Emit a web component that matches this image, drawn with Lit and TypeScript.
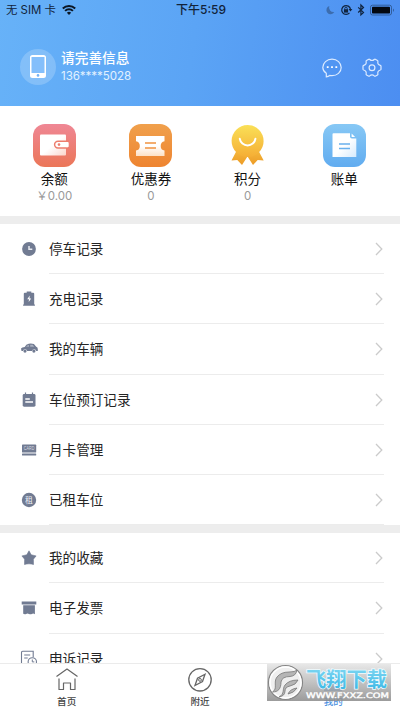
import { LitElement, html, svg, css } from "lit";
import { customElement } from "lit/decorators.js";

const statIcons = {
  wallet: svg`<defs><linearGradient id="w" x2="0" y2="1"><stop stop-color="#ef8795"/><stop offset="1" stop-color="#eb7658"/></linearGradient><linearGradient id="wi" x2="1" y2="1"><stop stop-color="#fff"/><stop offset=".5" stop-color="#fff"/><stop offset="1" stop-color="#fbd5cc"/></linearGradient></defs>
    <rect width="43" height="43" rx="12" fill="url(#w)"/><path d="M7 11.500q0-1 1-1h24q1 0 1 1v19q0 1-1 1H8q-1 0-1-1z" fill="url(#wi)"/>
    <path d="M35 17.200H25a3.400 3.400 0 0 0 0 6.800h10z" fill="#fff" stroke="#ed7c6c" stroke-width="1.500"/><rect x="33" y="17.900" width="2.700" height="5.400" rx="1" fill="#fff"/><circle cx="26" cy="20.600" r="1.300" fill="#ed7c6c"/>`,
  coupon: svg`<defs><linearGradient id="c" x2="0" y2="1"><stop stop-color="#f0a04c"/><stop offset="1" stop-color="#ee8430"/></linearGradient><linearGradient id="ci" x2="0" y2="1"><stop stop-color="#fff"/><stop offset=".5" stop-color="#fff"/><stop offset="1" stop-color="#fde1c6"/></linearGradient></defs>
    <rect width="43" height="43" rx="12" fill="url(#c)"/><path d="M7 12h28.500v5.200a4.800 4.800 0 0 0 0 9.400V32H7v-5.400a4.800 4.800 0 0 0 0-9.400z" fill="url(#ci)"/><path d="M16 19h11M16 24h11" stroke="#ef9240" stroke-width="1.500"/>`,
  medal: svg`<defs><linearGradient id="m" x2="0" y2="1"><stop stop-color="#fae057"/><stop offset="1" stop-color="#f5ae35"/></linearGradient><linearGradient id="mr" x2="0" y2="1"><stop stop-color="#f5bd42"/><stop offset="1" stop-color="#ed9b25"/></linearGradient></defs>
    <path d="M12 24 5.500 36.500l5.800-.4L16 41l5.500-8.500L27 41l4.700-5 6 .5L31 24z" fill="url(#mr)"/><circle cx="21.600" cy="17" r="16" fill="url(#m)"/><path d="M13.800 14.800a7.900 7.900 0 0 0 15.600 0" fill="none" stroke="#fff" stroke-width="2" stroke-linecap="round"/>`,
  bill: svg`<defs><linearGradient id="b" x2="0" y2="1"><stop stop-color="#87c8f5"/><stop offset="1" stop-color="#61acf0"/></linearGradient><linearGradient id="bi" x2="1" y2="1"><stop stop-color="#fff"/><stop offset=".5" stop-color="#fff"/><stop offset="1" stop-color="#d5eafd"/></linearGradient></defs>
    <rect width="43" height="43" rx="12" fill="url(#b)"/><path d="M10.500 9.300h16.500v3.200q0 2 2 2h4.300v18.500H9.500v-22.700q0-1 1-1z" fill="url(#bi)"/><path d="M28.600 9.500v3.400h3.500z" fill="#fff"/><path d="M16 20h11M16 24.500h11" stroke="#69b0ed" stroke-width="1.500"/>`,
};

const ink = "#717b92";
const rowIcons = {
  clock: svg`<circle cx="9" cy="9" r="6.900" fill="${ink}"/><path d="M9 6v3.300h3.300" fill="none" stroke="#e8eaf0" stroke-width="1.500"/>`,
  battery: svg`<path d="M6.700 1.500h4.600v1.200h1.900q1 0 1 1v10.800h.7v1.200H3.100v-1.200h.7V3.700q0-1 1-1h1.900z" fill="${ink}"/><path d="M9.700 5.500 7.200 9.300H9L8.700 12l2.500-3.600H9.500z" fill="#fff"/>`,
  car: svg`<path d="M1 8.600Q2 7.200 4.700 7q1.300-2.900 4-3.300 3-.4 5.200.3l2.300 2.700q1.600.4 1.600 2.400v2h-1.500a2.200 2.200 0 0 0-4.300 0H7.200a2.200 2.200 0 0 0-4.300 0H1.500z" fill="${ink}"/><path d="M6 6.800Q7.200 5 9 4.900v1.900zm4.200-2h2.500l1.500 1.900-4 .1z" fill="#a9b0bf"/><circle cx="5" cy="11.100" r="1.600" fill="${ink}"/><circle cx="13.900" cy="11.100" r="1.600" fill="${ink}"/>`,
  calendar: svg`<rect x="2.700" y="3" width="12.800" height="12.700" rx="1.400" fill="${ink}"/><path d="M5.500 1.600v2M12.500 1.600v2" stroke="${ink}" stroke-width="1.200"/><path d="M5.300 8h4.500M5.300 11h7.700" stroke="#fff" stroke-width="1.300"/>`,
  card: svg`<rect x="2" y="3.600" width="14.200" height="8" rx=".7" fill="${ink}"/><rect x="2" y="12.500" width="14.200" height="1.900" rx=".5" fill="${ink}"/><text x="9.100" y="9.200" text-anchor="middle" font-size="4.500" textLength="10.500" lengthAdjust="spacingAndGlyphs" font-family="Liberation Sans, sans-serif" fill="#d9dce3">CARD</text>`,
  rent: svg`<circle cx="9" cy="9" r="7.200" fill="${ink}"/><text x="9" y="11.900" text-anchor="middle" font-size="7.800" font-family="Noto Sans CJK SC, sans-serif" fill="#eef0f4">租</text>`,
  star: svg`<path d="m9 1.800 2.200 4 4.900 1.100-2.700 3.300.1 5.300q-2.200-.7-4.500-.7t-4.500.7l.1-5.300-2.700-3.300 4.900-1.100z" fill="${ink}" stroke="${ink}" stroke-width=".6" stroke-linejoin="round"/>`,
  invoice: svg`<path d="M1.700 2.400h14.600v3H1.700zM3.200 6.200h11.700v9q-1.600-1-3-.3-1.500.7-2.900 0-1.500-.7-2.900 0-1.500.6-2.900-.2z" fill="${ink}"/>`,
  appeal: svg`<path d="M6.500 15.500H2.700q-1.200 0-1.200-1.200V2.500q0-1.200 1.200-1.200h10.500v6M4.200 5h6M4.200 8h3.500" fill="none" stroke="${ink}" stroke-width="1.100"/><circle cx="12.300" cy="11.900" r="4.200" fill="#fff" stroke="${ink}" stroke-width="1.100"/><path d="M12.300 9.500v2.400h2" fill="none" stroke="${ink}"/>`,
};

@customElement("app-root")
export class AppRoot extends LitElement {
  static styles = css`
    :host { display: flex; flex-direction: column; position: relative; width: 400px; height: 711px; overflow: hidden; background: #fff;
      font-family: "Liberation Sans", "Noto Sans CJK SC", sans-serif; color: #252525; }
    * { box-sizing: border-box; }
    svg { display: block; flex: none; overflow: visible; }
    .head { flex: none; height: 106px; background: linear-gradient(98deg, #67b2f8 0%, #5ba4f5 48%, #4c8ef1 100%); }
    .status { height: 20px; display: grid; grid-template-columns: 1fr auto 1fr; align-items: center; padding: 0 4px 0 6px; font: 12px/20px Inter, "Noto Sans CJK SC", sans-serif; color: #12233a; }
    .left { display: flex; gap: 6px; align-items: center; font-size: 11.400px; white-space: pre; }
    .time { font-weight: 500; font-size: 12px; }
    .right { display: flex; justify-content: flex-end; }
    .user { display: flex; align-items: center; height: 36px; margin-top: 29px; padding: 0 18px 0 20px; color: #fff; }
    .who { flex: 1; margin: -1px 0 0 5px; }
    .name { font: 500 13.700px/18px "Noto Sans CJK SC", sans-serif; }
    .phone { margin-top: 1px; font: 11.600px/18px Inter, sans-serif; color: #e1f1ff; letter-spacing: -.08px; }
    .acts { display: flex; gap: 20px; margin-top: 1px; }
    .stats { flex: none; height: 110px; padding: 18px 7.500px 0 6px; display: grid; grid-template-columns: repeat(4, 1fr); }
    .stat { display: flex; flex-direction: column; align-items: center; }
    .label { font: 13.500px/20px "Noto Sans CJK SC", sans-serif; margin-top: 1px; color: #111; }
    .value { margin-top: 1px; font: 11.500px/14px Inter, "Noto Sans CJK SC", sans-serif; color: #999; }
    .band { flex: none; height: 8px; background: #ededed; }
    .row { flex: none; height: 50.200px; display: flex; align-items: center; padding-left: 20px; }
    .cell { flex: 1; align-self: stretch; display: flex; align-items: center; justify-content: space-between; margin: 0 16px 0 11px; padding-right: 1px; border-bottom: 1px solid #ececec; font: 13.600px/20px "Noto Sans CJK SC", sans-serif; }
    .cell span { padding-bottom: 1px; }
    .cell svg { margin-top: 1px; }
    .tabs { position: absolute; left: 0; right: 0; bottom: 0; height: 48px; padding-top: 4px; background: #fff; border-top: 1px solid #ebebeb; display: grid; grid-template-columns: repeat(3, 1fr); }
    .tab { display: flex; flex-direction: column; align-items: center; font: 500 9.600px/14px "Noto Sans CJK SC", sans-serif; color: #444; }
    .tab svg { margin-bottom: 2px; }
    .on { color: #4c91df; }
    .mark { position: absolute; left: 267px; top: 664px; width: 124px; height: 37px; }
  `;

  row(icon: keyof typeof rowIcons, label: string) {
    return html`<div class="row"><svg width="18" height="18" viewBox="0 0 18 18">${rowIcons[icon]}</svg>
      <div class="cell"><span>${label}</span><svg width="8" height="14" viewBox="0 0 8 14"><path d="m1 1 5.800 6L1 13" fill="none" stroke="#cbcbcb" stroke-width="1.300"/></svg></div></div>`;
  }

  stat(icon: keyof typeof statIcons, label: string, value: string) {
    return html`<div class="stat"><svg width="43" height="43" viewBox="0 0 43 43">${statIcons[icon]}</svg><div class="label">${label}</div><div class="value">${value}</div></div>`;
  }

  render() {
    return html`
      <div class="head">
        <div class="status">
          <div class="left"><span>无 SIM 卡</span><svg width="14" height="10" viewBox="0 0 14 10"><path d="M.8 3.500a9 9 0 0 1 12.400 0M3.100 5.900a5.600 5.600 0 0 1 7.800 0" fill="none" stroke="#0b1624" stroke-width="2"/><path d="M4.900 7.700a3 3 0 0 1 4.200 0L7 10z" fill="#0b1624"/></svg></div>
          <div class="time">下午5:59</div>
          <div class="right"><svg width="71" height="14" viewBox="0 0 71 14">
            <path d="M4.300 3a4.200 4.200 0 1 0 5 6A4.500 4.500 0 0 1 4.300 3z" fill="#3c6dae"/>
            <path d="M24.500 9.800a4.400 4.400 0 1 1 1-3.500" fill="none" stroke="#10243f" stroke-width="1.200"/><path d="m23.600 6 3.800 0-2 2.400z" fill="#10243f"/><rect x="18.900" y="6.200" width="4.200" height="3.400" fill="#10243f"/><path d="M19.800 6.500V5.400a1.200 1.200 0 0 1 2.400 0v1.100" fill="none" stroke="#10243f" stroke-width=".9"/>
            <path d="m33.200 4.400 5.300 5-2.600 2.500V2l2.600 2.500-5.300 5" fill="none" stroke="#10243f" stroke-width="1.200"/>
            <rect x="45.500" y="2.200" width="21" height="9.800" rx="2" fill="none" stroke="#315d9b"/><rect x="47" y="3.700" width="18" height="6.800" rx=".8" fill="#030810"/><path d="M68 5.400q2 1.700 0 3.500z" fill="#315d9b"/></svg></div>
        </div>
        <div class="user">
          <svg width="36" height="36" viewBox="0 0 36 36"><circle cx="18" cy="18" r="18" fill="#fff" opacity=".2"/><path fill-rule="evenodd" d="M12.500 6h11q2.500 0 2.500 2.500v18q0 2.500-2.500 2.500h-11q-2.500 0-2.500-2.500v-18Q10 6 12.500 6zm-.3 2.500v15h11.600v-15z" fill="#fff"/><rect x="11.500" y="8" width="13" height="16" fill="#84bffb"/><circle cx="18" cy="26.400" r="1.300" fill="#75b3f5"/></svg>
          <div class="who"><div class="name">请完善信息</div><div class="phone">136****5028</div></div>
          <div class="acts">
            <svg width="20" height="20" viewBox="0 0 20 20" fill="none" stroke="#dcebff" stroke-width="1.200"><path d="M4.300 18.800v-3.500C2.200 13.900.8 11.900.8 9.500.8 4.800 4.900 1.200 10 1.200s9.200 3.600 9.200 8.300-4.100 8.200-9.200 8.200q-1.200 0-2.200-.3-1.600 1.200-3.500 1.400z"/><path d="M4.800 9.200h1.800M9.100 9.200h1.800M13.400 9.200h1.800" stroke-width="1.800" stroke="#fff"/></svg>
            <svg width="20" height="20" viewBox="0 0 20 20" fill="none" stroke="#dcebff" stroke-width="1.200" stroke-linejoin="round"><path d="M6.800 1.200q.5-.2.900.3 2.300 2 4.600 0 .4-.5.900-.3l2.300 1.300q.6.300.4.900-.7 3.200 2.400 4 .7.200.7.800v3q0 .6-.7.800-3.100.8-2.400 4 .2.600-.4.900l-2.300 1.300q-.5.200-.9-.3-2.300-2-4.600 0-.4.500-.9.300L4.500 16.900q-.6-.3-.4-.9.700-3.200-2.400-4-.7-.2-.7-.8v-3q0-.6.700-.8 3.100-.8 2.400-4-.2-.6.400-.9z"/><circle cx="10" cy="9.700" r="2.900"/></svg>
          </div>
        </div>
      </div>
      <div class="stats">
        ${this.stat("wallet", "余额", "￥0.00")}${this.stat("coupon", "优惠券", "0")}${this.stat("medal", "积分", "0")}${this.stat("bill", "账单", "")}
      </div>
      <div class="band"></div>
      ${this.row("clock", "停车记录")}${this.row("battery", "充电记录")}${this.row("car", "我的车辆")}${this.row("calendar", "车位预订记录")}${this.row("card", "月卡管理")}${this.row("rent", "已租车位")}
      <div class="band"></div>
      ${this.row("star", "我的收藏")}${this.row("invoice", "电子发票")}${this.row("appeal", "申诉记录")}
      <div class="tabs">
        <div class="tab"><svg width="24" height="24" viewBox="0 0 24 24" fill="none" stroke="#666" stroke-width="1.200" stroke-linejoin="round"><path d="M1.500 8.500 12 1l10.500 7.500M4 10.500V21.500h4.500V15h7v6.500H20v-11"/></svg>首页</div>
        <div class="tab"><svg width="24" height="24" viewBox="0 0 24 24" fill="none" stroke="#666" stroke-width="1.300"><circle cx="12" cy="11.800" r="11.200"/><path d="m17 6.300-2.500 7.200-7.500 4 2.500-7.200z"/><circle cx="12" cy="11.900" r="1.400" stroke-width="1"/></svg>附近</div>
        <div class="tab on"><svg width="24" height="24" viewBox="0 0 24 24" fill="#4c91df"><circle cx="12" cy="7" r="5"/><path d="M3 23q0-9 9-9t9 9z"/></svg>我的</div>
      </div>
      <svg class="mark" viewBox="0 0 124 37">
        <defs><linearGradient id="bg" x2="0" y2="1"><stop stop-color="#e4e4e4"/><stop offset="1" stop-color="#8b8b8b"/></linearGradient><linearGradient id="tx" x2="0" y2="1"><stop stop-color="#8adcf4"/><stop offset="1" stop-color="#35b4e4"/></linearGradient></defs>
        <rect width="124" height="37" fill="url(#bg)" opacity=".86"/>
        <circle cx="18.500" cy="18.500" r="17" fill="#efefef" stroke="#858585" stroke-width="1.200"/><circle cx="18.500" cy="18.500" r="15.500" fill="none" stroke="#fff" stroke-width="1.500"/>
        <path d="M5.500 28C11 25 6 18 10 13q4-5 12-5 6 0 8-2-1 6-7 6.500-8 0-9 5.500c0 7-3 10-8.500 10zM12 33c6-3 3-8 6-12q4-5 13-5-2 5-8 6-5 1-5 5 0 5-6 6zM21 30q2-5 9-6-3 5-9 6" fill="#b5b5b5" stroke="#777" stroke-width=".8"/>
        <text x="39" y="22.500" textLength="81" lengthAdjust="spacingAndGlyphs" font-family="Noto Sans CJK SC, sans-serif" font-weight="700" font-size="20" fill="url(#tx)" stroke="#effbff" stroke-width="1.500" paint-order="stroke">飞翔下载</text>
        <text x="39" y="34" textLength="83" lengthAdjust="spacingAndGlyphs" font-family="DejaVu Sans, sans-serif" font-size="7.500" fill="#fff" stroke="#fff" stroke-width=".35">WWW.FXXZ.COM</text>
      </svg>`;
  }
}
